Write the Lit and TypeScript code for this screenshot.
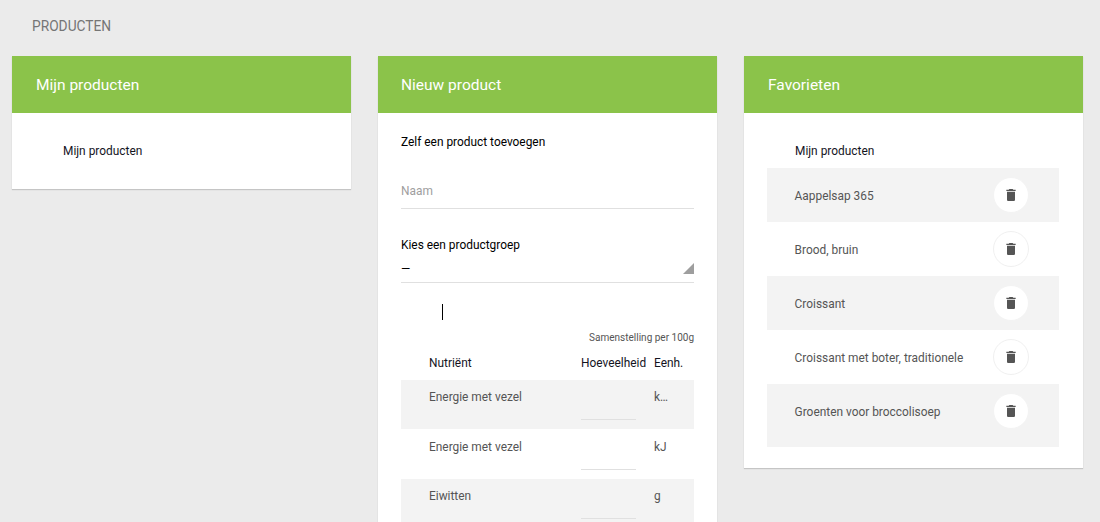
import { LitElement, html, css, svg } from "lit";
import { customElement } from "lit/decorators.js";

const trash = svg`<path d="M6 19c0 1.1.9 2 2 2h8c1.1 0 2-.9 2-2V7H6v12zM19 4h-3.5l-1-1h-5l-1 1H5v2h14V4z"/>`;

@customElement("app-root")
export class AppRoot extends LitElement {
  static styles = css`
    :host {
      display: block;
      height: 522px;
      overflow: hidden;
      background: #ebebeb;
      font-family: Roboto, "Liberation Sans", sans-serif;
      font-size: 11.9px;
      color: #555;
    }
    .crumb {
      padding: 18px 0 0 32px;
      height: 56px;
      box-sizing: border-box;
      font-size: 13.75px;
      line-height: 17px;
      color: #757575;
    }
    .cols {
      display: grid;
      grid-template-columns: repeat(3, 339px);
      column-gap: 27px;
      padding-left: 12px;
      align-items: start;
    }
    .card {
      background: #fff;
      box-shadow: 0 1px 1px rgba(0, 0, 0, 0.16);
    }
    .head {
      height: 57px;
      box-sizing: border-box;
      background: #8bc34a;
      color: #fff;
      font-size: 15.5px;
      line-height: 57px;
      padding: 1px 0 0 24px;
    }
    .new-head { padding-left: 23px; }
    .strong { color: #14141e; line-height: 14px; }
    .one { padding: 31px 51px 31px; }
    .two { padding: 22px 23px 0; }
    .black { color: #000; }
    .field {
      margin-top: 34px;
      height: 26px;
      padding-top: 1px;
      box-sizing: border-box;
      line-height: 14px;
      color: #9e9e9e;
      border-bottom: 1px solid #e0e0e0;
    }
    .label { margin-top: 29px; line-height: 14px; color: #000; }
    .select {
      position: relative;
      margin-top: 10px;
      height: 21px;
      box-sizing: border-box;
      line-height: 14px;
      color: #000;
      border-bottom: 1px solid #e0e0e0;
    }
    .arrow {
      position: absolute;
      right: 0;
      top: 1px;
      width: 11px;
      height: 11px;
      background: #9e9e9e;
      clip-path: polygon(100% 0, 100% 100%, 0 100%);
    }
    .caret {
      width: 1px;
      height: 16px;
      background: #000;
      margin: 21px 0 0 41px;
    }
    .per {
      margin-top: 12px;
      text-align: right;
      font-size: 10px;
      line-height: 12px;
      color: #555;
    }
    .grid-row {
      display: grid;
      grid-template-columns: 152px 73px 1fr;
      padding-left: 28px;
    }
    .thead {
      margin-top: 11px;
      height: 25px;
      padding-top: 1px;
      box-sizing: border-box;
      line-height: 14px;
      color: #14141e;
    }
    .row { height: 49.4px; line-height: 14px; }
    .row.odd { background: #f3f3f3; }
    .row > div { padding-top: 10px; }
    .row.even > div { padding-top: 11px; }
    .row .amount, .row.even .amount { padding: 0; }
    .row .amount i {
      display: block;
      width: 55px;
      height: 40px;
      box-sizing: border-box;
      border-bottom: 1px solid #e0e0e0;
    }
    .row.even .amount i { height: 41px; }
    .unit { overflow: hidden; text-overflow: ellipsis; white-space: nowrap; width: 16px; }
    .three { padding: 31px 24px 21px 23px; }
    .fav-title { padding-left: 28px; margin-bottom: 10px; }
    .fav {
      display: flex;
      height: 54px;
      padding: 9px 30px 0 27.6px;
      box-sizing: border-box;
      justify-content: space-between;
      align-items: flex-start;
      line-height: 18px;
    }
    .fav.last { height: 63px; }
    .fav.odd { background: #f3f3f3; }
    .fav span { padding-top: 10px; }
    .del {
      width: 36px;
      height: 36px;
      box-sizing: border-box;
      border-radius: 50%;
      border: 1px solid #f0f0f0;
      background: #fff;
      padding: 0;
      display: flex;
      align-items: center;
      justify-content: center;
    }
    .fav.odd .del { border-color: #f3f3f3; }
    .del svg { width: 16px; height: 16px; fill: #555; }
  `;

  render() {
    const nutrients = [
      ["Energie met vezel", "kcal"],
      ["Energie met vezel", "kJ"],
      ["Eiwitten", "g"],
    ];
    const favs = [
      "Aappelsap 365",
      "Brood, bruin",
      "Croissant",
      "Croissant met boter, traditionele",
      "Groenten voor broccolisoep",
    ];
    return html`
      <div class="crumb">PRODUCTEN</div>
      <div class="cols">
        <section class="card">
          <div class="head">Mijn producten</div>
          <div class="one strong">Mijn producten</div>
        </section>
        <section class="card">
          <div class="head new-head">Nieuw product</div>
          <div class="two">
            <div class="strong black">Zelf een product toevoegen</div>
            <div class="field">Naam</div>
            <div class="label">Kies een productgroep</div>
            <div class="select">—<span class="arrow"></span></div>
            <div class="caret"></div>
            <div class="per">Samenstelling per 100g</div>
            <div class="grid-row thead">
              <div>Nutriënt</div>
              <div>Hoeveelheid</div>
              <div>Eenh.</div>
            </div>
            ${nutrients.map(
              ([n, u], i) => html`
                <div class="grid-row row ${i % 2 === 0 ? "odd" : "even"}">
                  <div>${n}</div>
                  <div class="amount"><i></i></div>
                  <div class="unit">${u}</div>
                </div>
              `
            )}
          </div>
        </section>
        <section class="card">
          <div class="head">Favorieten</div>
          <div class="three">
            <div class="strong fav-title">Mijn producten</div>
            ${favs.map(
              (f, i) => html`
                <div class="fav ${i % 2 === 0 ? "odd" : ""} ${i === favs.length - 1 ? "last" : ""}">
                  <span>${f}</span>
                  <button class="del" aria-label="Verwijderen">
                    <svg viewBox="0 0 24 24">${trash}</svg>
                  </button>
                </div>
              `
            )}
          </div>
        </section>
      </div>
    `;
  }
}
